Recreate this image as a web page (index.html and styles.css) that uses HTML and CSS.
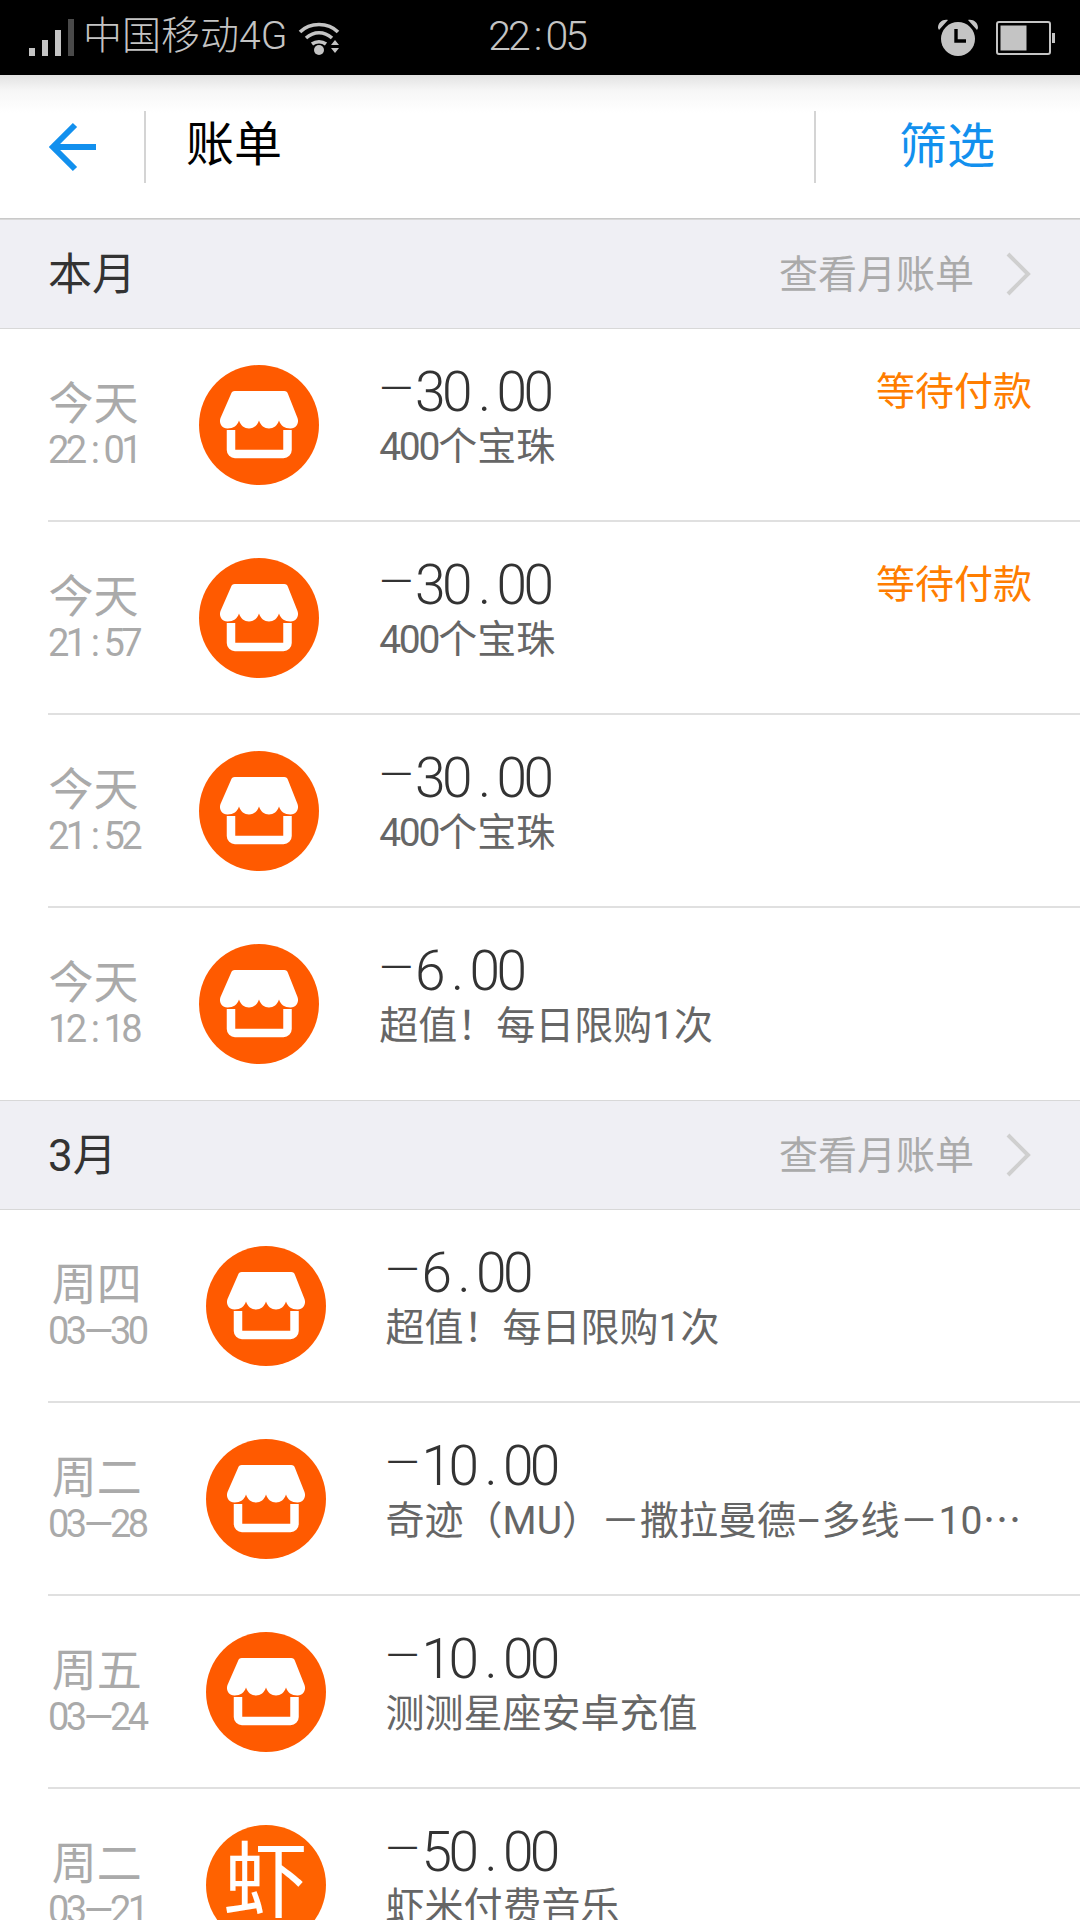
FILE: index.html
```html
<!DOCTYPE html>
<html lang="zh-CN">
<head>
<meta charset="utf-8">
<title>账单</title>
<link rel="stylesheet" href="styles.css">
</head>
<body>
<svg class="defs" width="0" height="0" aria-hidden="true">
  <symbol id="store" viewBox="0 0 120 120">
    <circle cx="60" cy="60" r="60" fill="#ff5a00"/>
    <path d="M32 65V85a4 4 0 0 0 4 4H84.500a4 4 0 0 0 4-4V65" fill="none" stroke="#fff" stroke-width="8.500"/>
    <path d="M36 26H85a4 4 0 0 1 4 3l9.500 24c1.500 4 0 10-7 10.500-6 0-10-3-11.500-8-1.500 5-5.500 8-10 8s-8.500-3-10-8c-1.500 5-5.500 8-10 8s-8.500-3-10-8c-1.500 5-5.500 8-11.500 8-7-.5-8.500-6.500-7-10.500L32 29a4 4 0 0 1 4-3z" fill="#fff"/>
  </symbol>
</svg>

<div class="status">
  <svg class="signal" width="46" height="37" viewBox="0 0 46 37"><path fill="#c4c4c4" d="M0 29h6v8H0zM13 21h6v16h-6zM26 11h6v26h-6z"/><path fill="#4a4a4a" d="M39 0h6v37h-6z"/></svg>
  <span class="carrier">中国移动4G</span>
  <svg class="wifi" width="44" height="36" viewBox="0 0 44 36"><g fill="none" stroke="#c4c4c4" stroke-width="3.600"><path d="M2 12C12 2 30 2 40 12"/><path d="M8 18c8-7 18-7 26 0"/><path d="M14 24c4-3 10-3 14 0"/></g><circle cx="21" cy="30" r="5" fill="#c4c4c4"/><path fill="#c4c4c4" d="M33 25l4-5 4 5zM33 28h8l-4 5z"/></svg>
  <span class="clock">22<span class="colon">:</span>05</span>
  <svg class="alarm" width="42" height="38" viewBox="0 0 42 38"><path fill="#c4c4c4" d="M1 9C1 3 6 0 11 1L2 11zM41 9c0-6-5-9-10-8l9 10z"/><circle cx="21" cy="20" r="17" fill="#c4c4c4"/><path d="M19 10v12h10" fill="none" stroke="#000" stroke-width="3.400"/></svg>
  <svg class="battery" width="60" height="34" viewBox="0 0 60 34"><rect x="1" y="1" width="53" height="32" rx="2" fill="none" stroke="#c4c4c4" stroke-width="2"/><rect x="4.500" y="4.500" width="26" height="25" fill="#c4c4c4"/><rect x="56" y="12" width="3" height="10" fill="#c4c4c4"/></svg>
</div>

<header class="topbar">
  <div class="back-cell">
    <svg width="48" height="50" viewBox="0 0 48 50"><path d="M48 25H5M27 3L5 25l22 22" fill="none" stroke="#1290ee" stroke-width="6"/></svg>
  </div>
  <h1 class="title">账单</h1>
  <div class="filter">筛选</div>
</header>

<section class="month">
  <span class="month-name">本月</span>
  <span class="month-link">查看月账单</span>
  <svg class="chev" width="26" height="44" viewBox="0 0 26 44"><path d="M3 2l20 20L3 42" fill="none" stroke="#cfcfcf" stroke-width="4"/></svg>
</section>

<article class="row">
  <div class="date"><div class="day">今天</div><div class="time">22<span class="colon">:</span>01</div></div>
  <svg class="logo" width="120" height="120"><use href="#store"/></svg>
  <div class="info"><div class="amount"><span class="minus">—</span>30<span class="dot">.</span>00</div><div class="desc"><span class="num">400</span>个宝珠</div></div>
  <div class="state">等待付款</div>
</article>
<article class="row">
  <div class="date"><div class="day">今天</div><div class="time">21<span class="colon">:</span>57</div></div>
  <svg class="logo" width="120" height="120"><use href="#store"/></svg>
  <div class="info"><div class="amount"><span class="minus">—</span>30<span class="dot">.</span>00</div><div class="desc"><span class="num">400</span>个宝珠</div></div>
  <div class="state">等待付款</div>
</article>
<article class="row">
  <div class="date"><div class="day">今天</div><div class="time">21<span class="colon">:</span>52</div></div>
  <svg class="logo" width="120" height="120"><use href="#store"/></svg>
  <div class="info"><div class="amount"><span class="minus">—</span>30<span class="dot">.</span>00</div><div class="desc"><span class="num">400</span>个宝珠</div></div>
</article>
<article class="row row-last">
  <div class="date"><div class="day">今天</div><div class="time">12<span class="colon">:</span>18</div></div>
  <svg class="logo" width="120" height="120"><use href="#store"/></svg>
  <div class="info"><div class="amount"><span class="minus">—</span>6<span class="dot">.</span>00</div><div class="desc">超值！每日限购1次</div></div>
</article>

<section class="month">
  <span class="month-name">3月</span>
  <span class="month-link">查看月账单</span>
  <svg class="chev" width="26" height="44" viewBox="0 0 26 44"><path d="M3 2l20 20L3 42" fill="none" stroke="#cfcfcf" stroke-width="4"/></svg>
</section>

<article class="row">
  <div class="date"><div class="day">周四</div><div class="time">03—30</div></div>
  <svg class="logo" width="120" height="120"><use href="#store"/></svg>
  <div class="info"><div class="amount"><span class="minus">—</span>6<span class="dot">.</span>00</div><div class="desc">超值！每日限购1次</div></div>
</article>
<article class="row">
  <div class="date"><div class="day">周二</div><div class="time">03—28</div></div>
  <svg class="logo" width="120" height="120"><use href="#store"/></svg>
  <div class="info"><div class="amount"><span class="minus">—</span>10<span class="dot">.</span>00</div><div class="desc">奇迹（MU）－撒拉曼德–多线－10⋯</div></div>
</article>
<article class="row">
  <div class="date"><div class="day">周五</div><div class="time">03—24</div></div>
  <svg class="logo" width="120" height="120"><use href="#store"/></svg>
  <div class="info"><div class="amount"><span class="minus">—</span>10<span class="dot">.</span>00</div><div class="desc">测测星座安卓充值</div></div>
</article>
<article class="row">
  <div class="date"><div class="day">周二</div><div class="time">03—21</div></div>
  <div class="logo xiami">虾</div>
  <div class="info"><div class="amount"><span class="minus">—</span>50<span class="dot">.</span>00</div><div class="desc">虾米付费音乐</div></div>
</article>
</body>
</html>
```
FILE: styles.css
```css
* { box-sizing: border-box; }
html, body { margin: 0; padding: 0; }
body {
  width: 1080px;
  height: 1920px;
  overflow: hidden;
  background: #fff;
  font-family: Roboto, "Noto Sans CJK SC", sans-serif;
  font-weight: 300;
}
.defs { position: absolute; }

.status {
  height: 75px;
  background: #000;
  color: #c4c4c4;
  display: flex;
  align-items: center;
  padding-left: 29px;
}
.carrier { font-size: 39px; line-height: 56px; height: 56px; margin-left: 8px; font-weight: 300; margin-bottom: 3px; }
.wifi { margin-left: 11px; }
.clock { font-size: 41px; line-height: 56px; height: 56px; margin-left: 146px; margin-bottom: 3px; letter-spacing: -3px; }
.colon { margin: 0 6px; }
.alarm { margin-left: auto; }
.battery { margin-left: 17px; margin-right: 24px; }

.topbar {
  height: 144px;
  padding-top: 36px;
  padding-bottom: 35px;
  display: flex;
  align-items: stretch;
  background: linear-gradient(#e2e2e2 0, #f7f7f7 16px, #fff 38px);
  border-bottom: 1px solid #c9c9c9;
}
.back-cell {
  width: 146px;
  padding-left: 48px;
  display: flex;
  align-items: center;
  border-right: 2px solid #d4d4d4;
}
.title {
  margin: 0;
  flex: 1;
  padding-left: 40px;
  font-size: 48px;
  font-weight: 400;
  color: #000;
  line-height: 68px;
}
.filter {
  width: 266px;
  padding-left: 83px;
  border-left: 2px solid #d4d4d4;
  font-size: 48px;
  font-weight: 400;
  color: #1290ee;
  line-height: 72px;
}

.month {
  height: 110px;
  padding: 0 48px;
  display: flex;
  align-items: center;
  background: #efeff4;
  border-top: 1px solid #d8d8d8;
  border-bottom: 1px solid #d8d8d8;
}
.month-name { font-size: 44px; font-weight: 400; color: #333; padding-top: 2px; line-height: 58px; }
.month-link { margin-left: auto; font-size: 39px; font-weight: 400; color: #aaa; padding-top: 2px; line-height: 56px; }
.chev { margin-left: 31px; margin-right: 1px; }

.row {
  height: 193px;
  margin-left: 48px;
  display: flex;
  align-items: center;
  border-bottom: 2px solid #e0e0e0;
}
.row-last { height: 192px; border-bottom: 0; }

.date { display: flex; flex-direction: column; align-items: center; padding-top: 2px; color: #aaa; font-weight: 400; }
.day { font-size: 45px; line-height: 48px; }
.time { font-size: 38px; line-height: 42px; letter-spacing: -3.500px; }
.time .colon { margin: 0 7px; }

.logo { margin-left: 60px; flex: none; }
.xiami {
  width: 120px;
  height: 120px;
  border-radius: 50%;
  background: #ff6200;
  color: #fff;
  font-size: 84px;
  font-weight: 400;
  line-height: 116px;
  text-align: center;
}

.info { margin-left: 60px; flex: 1; align-self: flex-start; margin-top: 30px; }
.amount { font-size: 55px; line-height: 60px; color: #333; letter-spacing: -3.600px; }
.minus { font-size: 44px; letter-spacing: 2px; vertical-align: 7px; }
.dot { margin: 0 9px; }
.desc { font-size: 39px; font-weight: 400; line-height: 50px; color: #666; white-space: nowrap; }
.num { letter-spacing: -2.200px; }
.state {
  align-self: flex-start;
  margin-top: 38px;
  margin-right: 48px;
  font-size: 39px;
  font-weight: 400;
  line-height: 50px;
  color: #ff7d00;
}
```
